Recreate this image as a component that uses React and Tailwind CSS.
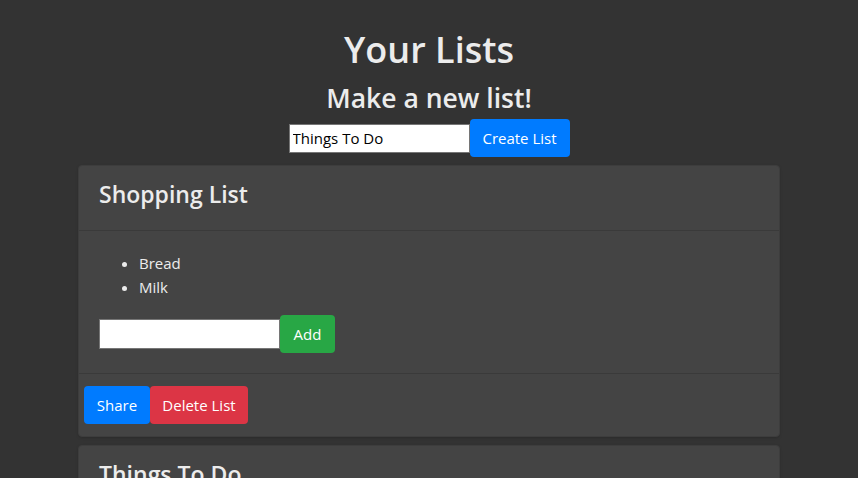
import React, { useState } from "react";

const font = { fontFamily: '"Open Sans", "Noto Sans", sans-serif' };

const ListCard = ({ title, items }) => {
  const [text, setText] = useState("");
  return (
    <div className="bg-[#444444] border border-[#3d3d3d] rounded-[4px] mb-2 shadow-sm">
      <div className="px-5 pt-[9px] pb-[17px] border-b border-[#3a3a3a]">
        <h3 className="text-[23px] font-semibold leading-[38px] text-[#ececec]">{title}</h3>
      </div>
      <div className="px-5 pt-[20px] pb-5 border-b border-[#3a3a3a]">
        <ul className="list-disc pl-10 mb-4 text-[15px] leading-6 text-[#ececec]">
          {items.map((item) => (
            <li key={item}>{item}</li>
          ))}
        </ul>
        <div className="flex items-center">
          <input
            className="w-[181px] h-[30px] bg-white border border-[#767676] text-black px-1 outline-none"
            value={text}
            onChange={(e) => setText(e.target.value)}
          />
          <button className="bg-[#28a745] text-white text-[15px] h-[38px] w-[55px] rounded-[4px]">Add</button>
        </div>
      </div>
      <div className="px-[5px] py-3 flex">
        <button className="bg-[#007bff] text-white text-[15px] h-[38px] w-[66px] rounded-[4px]">Share</button>
        <button className="bg-[#dc3545] text-white text-[15px] h-[38px] w-[98px] rounded-[4px]">Delete List</button>
      </div>
    </div>
  );
};

const App = () => {
  const [name, setName] = useState("Things To Do");
  return (
    <div className="min-h-screen bg-[#333333] text-[#ececec]" style={font}>
      <div className="flex flex-col items-center pt-[26px]">
        <h1 className="text-[36px] font-semibold leading-[48px]">Your Lists</h1>
        <h2 className="text-[26.5px] font-semibold leading-[36px] mt-[6px]">Make a new list!</h2>
        <div className="flex items-center mt-[3px]">
          <input
            className="w-[181px] h-[29px] bg-white border border-[#767676] text-black text-[15px] px-[3px] outline-none"
            value={name}
            onChange={(e) => setName(e.target.value)}
          />
          <button className="bg-[#007bff] text-white text-[15px] h-[38px] w-[100px] rounded-[4px]">Create List</button>
        </div>
      </div>
      <div className="w-[702px] mx-auto mt-[8px]">
        <ListCard title="Shopping List" items={["Bread", "Milk"]} />
        <ListCard title="Things To Do" items={[]} />
      </div>
    </div>
  );
};

export default App;
